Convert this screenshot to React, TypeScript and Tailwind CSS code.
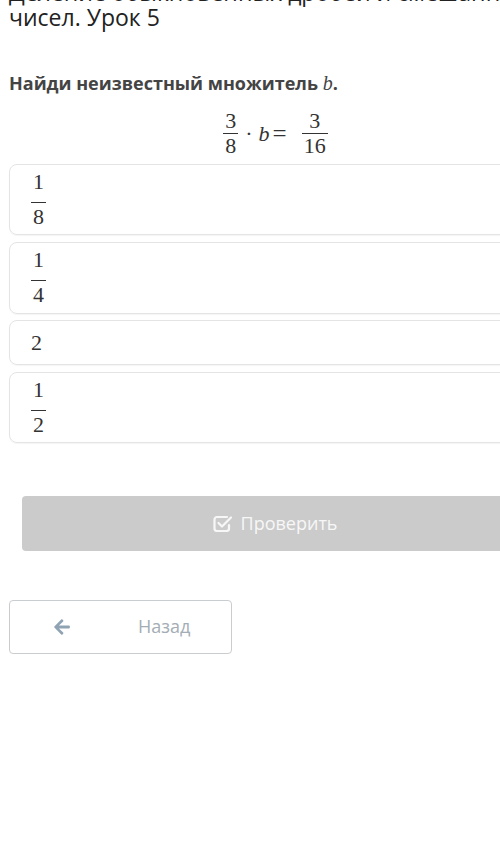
import { FaArrowLeft } from 'react-icons/fa';

const serif = "font-['Liberation_Serif','DejaVu_Serif',serif]";

function Frac({ num, den, big }: { num: string; den: string; big?: boolean }) {
  return (
    <span className={`inline-flex flex-col items-center align-middle text-[22px] leading-[22px] text-[#333] ${serif}`}>
      <span className="px-[2px]">{num}</span>
      <span className={`h-px w-full bg-[#333] ${big ? 'mt-[9px] mb-[3px]' : 'mt-px mb-px'}`} />
      <span className="px-[2px]">{den}</span>
    </span>
  );
}

function CheckSquare() {
  return (
    <svg width="20" height="17" viewBox="0 0 20 17" fill="none" stroke="currentColor" strokeWidth="2.2" strokeLinecap="round" strokeLinejoin="round">
      <path d="M14 2H4a2.5 2.5 0 0 0-2.5 2.5v9A2.5 2.5 0 0 0 4 16h9.5a2.5 2.5 0 0 0 2.5-2.5V10" />
      <path d="M5.5 8l3.5 3.5L18 2.5" />
    </svg>
  );
}

const answers = [
  { key: 'a', el: <Frac num="1" den="8" big />, h: 'h-[71px]' },
  { key: 'b', el: <Frac num="1" den="4" big />, h: 'h-[72px]' },
  { key: 'c', el: <span className={`text-[22px] text-[#333] ${serif}`}>2</span>, h: 'h-[45px]' },
  { key: 'd', el: <Frac num="1" den="2" big />, h: 'h-[71px]' },
];

export default function App() {
  return (
    <div className="w-full min-h-[842px] overflow-hidden bg-white">
      <div className="w-[540px] pl-[9px] font-['Open_Sans',sans-serif]">
        {/* lesson title, first line scrolled off the top */}
        <h1 className="mt-[-20px] whitespace-nowrap text-[23px] leading-[25px] font-normal text-[#222]">
          Деление обыкновенных дробей и смешанных
          <br />
          чисел. Урок 5
        </h1>

        <p className="mt-[42px] text-[18px] leading-[22px] font-bold text-[#444]">
          Найди неизвестный множитель{' '}
          <span className={`italic font-normal text-[20px] ${serif}`}>b</span>.
        </p>

        {/* equation */}
        <div className={`mt-[16px] flex items-center justify-center pl-[2px] text-[22px] text-[#333] ${serif}`}>
          <Frac num="3" den="8" />
          <span className="ml-[7px]">·</span>
          <span className="ml-[6px] italic">b</span>
          <span className="ml-[3px] text-[25px]">=</span>
          <span className="ml-[15px]">
            <Frac num="3" den="16" />
          </span>
        </div>

        {/* answer options */}
        <div className="mt-[7px] flex flex-col gap-[6.5px]">
          {answers.map((a) => (
            <div
              key={a.key}
              className={`${a.h} flex items-center rounded-[8px] border border-[#e4e4e4] pl-[21px] shadow-[0_1px_1px_rgba(0,0,0,0.04)]`}
            >
              {a.el}
            </div>
          ))}
        </div>

        {/* check button (disabled) */}
        <div className="mt-[53px] pl-[13px]">
          <button className="flex h-[55px] w-[506px] items-center justify-center gap-[8px] rounded-[4px] bg-[#cbcbcb] text-[18px] text-[#f7f7f7]">
            <CheckSquare />
            <span>Проверить</span>
          </button>
        </div>

        {/* back button */}
        <button className="mt-[49px] flex h-[54px] w-[223px] items-center rounded-[4px] border border-[#c9cdd0] pl-[43px] text-[18px] text-[#a3adb5]">
          <FaArrowLeft className="text-[#8fa3b3]" size={18} />
          <span className="ml-[67px]">Назад</span>
        </button>
      </div>
    </div>
  );
}
